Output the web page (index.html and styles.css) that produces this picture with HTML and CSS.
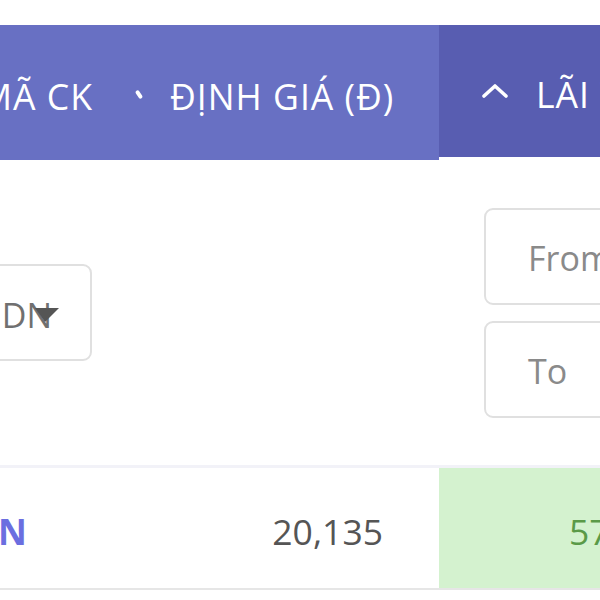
FILE: index.html
```html
<!DOCTYPE html>
<html lang="vi">
<head>
<meta charset="utf-8">
<title>Bảng định giá</title>
<link rel="stylesheet" href="styles.css">
</head>
<body>
<div class="viewport">
  <div class="table">
    <div class="th th-code"><span>MÃ CK</span></div>
    <div class="th th-price">
      <span class="sort-idle"></span>
      <span>ĐỊNH GIÁ (Đ)</span>
    </div>
    <div class="th th-gain">
      <svg class="chev" width="26" height="14" viewBox="0 0 26 14"><polyline points="2,12 13,2 24,12" fill="none" stroke="#fff" stroke-width="3.6" stroke-linecap="round" stroke-linejoin="round"/></svg>
      <span>LÃI TIỀM NĂNG (%)</span>
    </div>

    <div class="fc fc-code">
      <div class="select"><span class="sel-text">DN</span><svg class="caret" width="26" height="16" viewBox="0 0 26 16"><polygon points="1,2 25,2 11,16" fill="#555"/></svg></div>
    </div>
    <div class="fc fc-price"></div>
    <div class="fc fc-gain">
      <div class="input">From</div>
      <div class="input">To</div>
    </div>

    <div class="td td-code"><span class="ticker">HVN</span></div>
    <div class="td td-price">20,135</div>
    <div class="td td-gain">57.42</div>
  </div>
</div>
</body>
</html>
```
FILE: styles.css
```css
html, body {
  margin: 0;
  padding: 0;
  background: #fff;
}
body {
  font-family: "Open Sans", "Noto Sans", "Liberation Sans", sans-serif;
  overflow: hidden;
  width: 600px;
  height: 600px;
}
.viewport {
  width: 600px;
  height: 600px;
  overflow: hidden;
  padding-top: 25px;
  box-sizing: border-box;
}
.table {
  display: grid;
  grid-template-columns: 200px 319px 361px;
  margin-left: -80px;
  width: 880px;
}
.th {
  height: 135px;
  display: flex;
  align-items: center;
  color: #fff;
  font-size: 35.6px;
  letter-spacing: 1px;
  padding-top: 6px;
  box-sizing: border-box;
  white-space: nowrap;
}
.th-code {
  background: #6870c3;
  justify-content: flex-end;
  padding-right: 27px;
}
.th-price {
  background: #6870c3;
  padding-left: 17px;
}
.sort-idle {
  flex-shrink: 0;
  width: 4px;
  height: 9px;
  border-radius: 2px;
  background: #fff;
  transform: rotate(-35deg);
  margin-right: 29px;
  margin-top: -2px;
}
.th-gain {
  background: #585db1;
  height: 132px;
  padding-left: 43px;
  align-self: start;
}
.chev {
  flex-shrink: 0;
  margin-right: 28px;
  margin-top: -6px;
}

.fc {
  height: 305px;
  display: flex;
  align-items: center;
}
.fc-code {
  justify-content: flex-end;
  padding-right: 28px;
}
.select {
  width: 160px;
  height: 97px;
  box-sizing: border-box;
  border: 2px solid #e0e0e0;
  border-radius: 9px;
  display: flex;
  align-items: center;
  justify-content: flex-end;
  padding-right: 30px;
  color: #707070;
  font-size: 34px;
}
.sel-text {
  margin-right: -18px;
  margin-top: 4px;
}
.caret {
  flex-shrink: 0;
  margin-top: 2px;
}
.fc-gain {
  flex-direction: column;
  align-items: flex-start;
  justify-content: center;
  gap: 16px;
  padding-left: 45px;
}
.input {
  width: 300px;
  height: 97px;
  box-sizing: border-box;
  border: 2px solid #e0e0e0;
  border-radius: 9px;
  display: flex;
  align-items: center;
  padding-left: 42px;
  color: #8a8a8a;
  font-size: 34px;
  padding-top: 4px;
}

.td {
  height: 125px;
  border-top: 3px solid #f2f2f8;
  border-bottom: 2px solid #e6e6e6;
  box-sizing: border-box;
  display: flex;
  align-items: center;
  font-size: 35.5px;
  padding-top: 6px;
  white-space: nowrap;
}
.td-code {
  justify-content: flex-end;
  padding-right: 93px;
}
.ticker {
  color: #6b6ee0;
  font-weight: 700;
}
.td-price {
  justify-content: flex-end;
  padding-right: 56px;
  color: #555;
}
.td-gain {
  background: #d4f2cf;
  padding-left: 130px;
  color: #5a9a48;
}
```
